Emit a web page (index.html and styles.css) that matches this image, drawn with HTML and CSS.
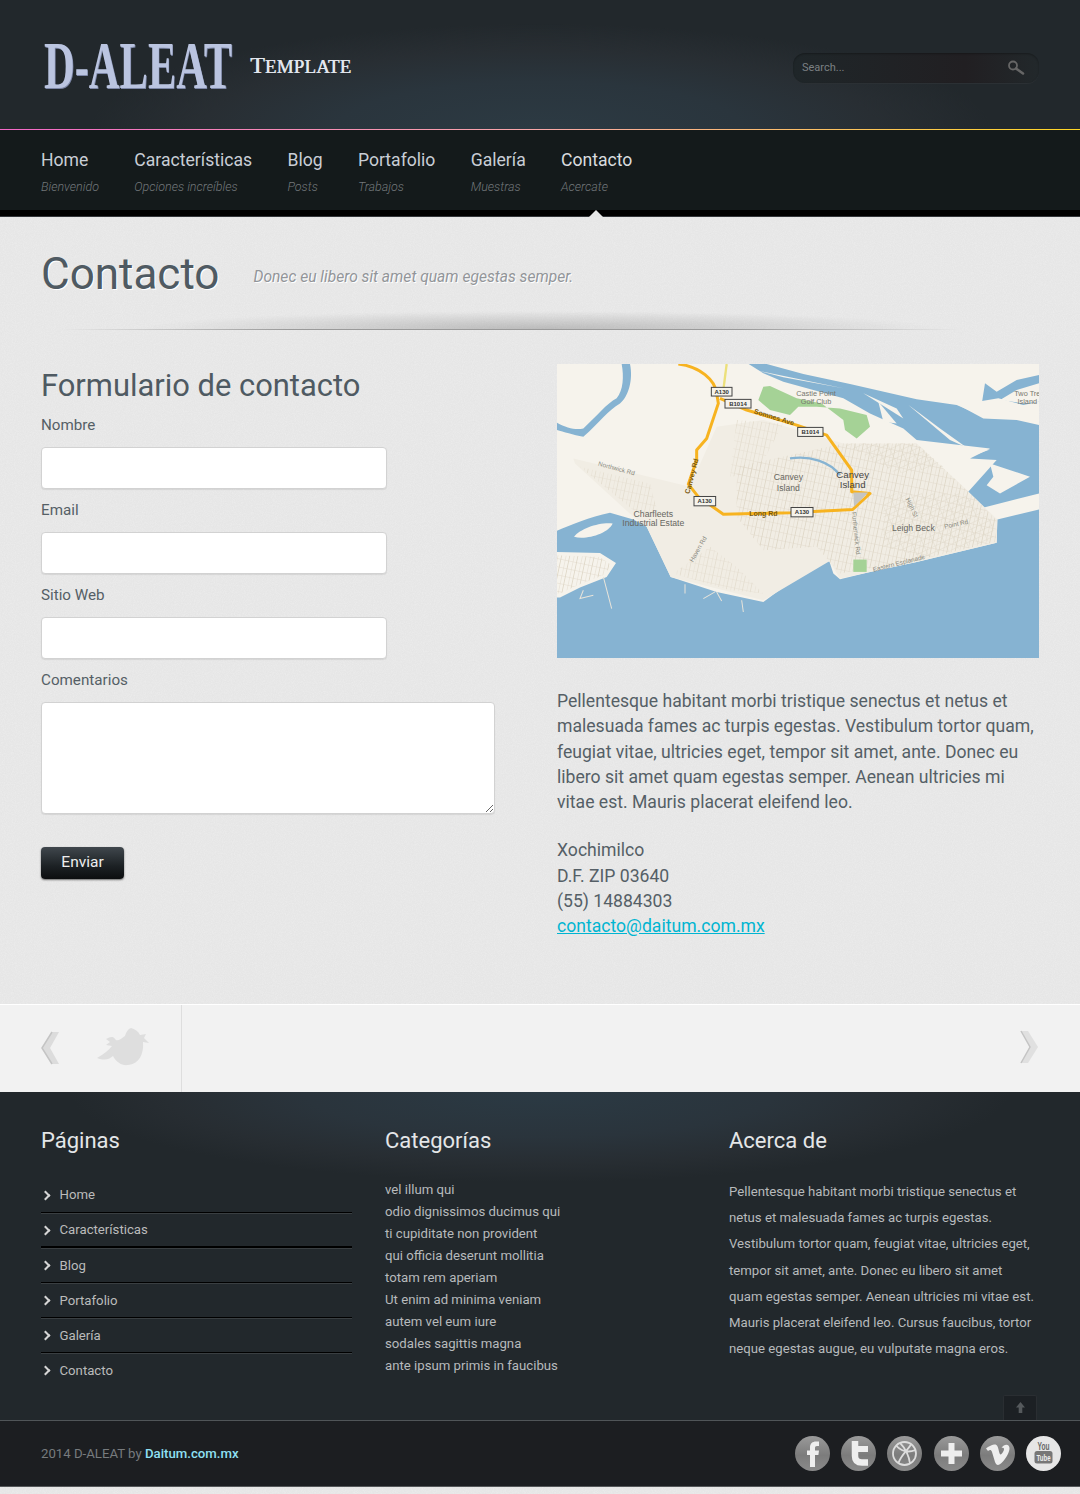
FILE: index.html
```html
<!DOCTYPE html>
<html lang="es">
<head>
<meta charset="utf-8">
<title>Contacto - D-ALEAT</title>
<link rel="stylesheet" href="styles.css">
</head>
<body>
<header class="site-header">
  <a class="logo"><span class="logo-box"><span class="logo-main">D-ALEAT</span></span><span class="logo-sub">T<span class="logo-small">EMPLATE</span></span></a>
  <form class="search">
    <span class="search-text">Search...</span>
    <svg class="search-icon" viewBox="0 0 18 15"><circle cx="6" cy="5.5" r="4" fill="none" stroke="#666" stroke-width="1.8"/><path d="M9 8.5l7 5" stroke="#666" stroke-width="2.6" stroke-linecap="round"/></svg>
  </form>
</header>
<nav class="main-nav">
  <a class="nav-item"><span class="nav-title">Home</span><em class="nav-sub">Bienvenido</em></a>
  <a class="nav-item"><span class="nav-title">Características</span><em class="nav-sub">Opciones increíbles</em></a>
  <a class="nav-item"><span class="nav-title">Blog</span><em class="nav-sub">Posts</em></a>
  <a class="nav-item"><span class="nav-title">Portafolio</span><em class="nav-sub">Trabajos</em></a>
  <a class="nav-item"><span class="nav-title">Galería</span><em class="nav-sub">Muestras</em></a>
  <a class="nav-item nav-active"><span class="nav-title">Contacto</span><em class="nav-sub">Acercate</em></a>
</nav>
<main class="content">
  <section class="page-head">
    <h1>Contacto</h1>
    <p>Donec eu libero sit amet quam egestas semper.</p>
  </section>
  <div class="divider"></div>
  <section class="columns">
    <form class="contact-form">
      <h2>Formulario de contacto</h2>
      <label>Nombre</label>
      <input type="text">
      <label>Email</label>
      <input type="text">
      <label>Sitio Web</label>
      <input type="text">
      <label>Comentarios</label>
      <textarea></textarea>
      <button type="button">Enviar</button>
    </form>
    <div class="contact-info">
      <svg class="map" viewBox="21 12 1446 881" preserveAspectRatio="none">
        <defs>
          <pattern id="streets" width="24" height="24" patternUnits="userSpaceOnUse" patternTransform="rotate(12)">
            <path d="M0 0H24M0 0V24M12 0V24" stroke="#dfd8c8" stroke-width="2.5" fill="none"/>
          </pattern>
          <pattern id="streets2" width="30" height="16" patternUnits="userSpaceOnUse" patternTransform="rotate(-25)">
            <path d="M0 0H30M0 0V16" stroke="#dfd8c8" stroke-width="2.5" fill="none"/>
          </pattern>
        </defs>
        <rect x="21" y="12" width="1446" height="881" fill="#f6f3ec"/>
        <path class="w" d="M21 512C60 495 120 470 180 458L250 478L290 500L362 650L500 695L640 725L790 615L838 603L850 640L870 657L960 635L1100 605L1340 548L1342 478L1467 448V893H21Z"/>
        <path class="l" d="M21 575L150 578L198 608L170 650L90 682L30 712L21 712Z"/>
        <path d="M21 585L150 590L185 615L160 645L90 672L30 700L21 700Z" fill="url(#streets)"/>
        <path class="l" d="M72 530C90 505 150 485 188 490C175 520 110 540 72 530Z"/>
        <path class="w" d="M240 12C250 60 235 110 210 130C175 150 150 185 100 230C70 225 40 215 21 210V188C50 205 80 210 100 205C140 170 170 130 200 115C220 90 222 50 215 12Z"/>
        <path class="w" d="M596 12H650L760 42L900 72L1100 118L1220 135L1290 165L1305 70L1340 95L1400 60L1467 45V70L1400 90L1350 120L1420 130L1467 125V400L1290 445L1240 418L1250 400L1340 300L1260 295L1320 265L1190 250L1100 240L1060 205L960 160L880 115L700 65L640 40Z"/>
        <path class="l" d="M1225 135L1345 115L1420 135L1467 125V195L1400 180L1300 175Z"/>
        <path class="l" d="M1320 310L1440 350L1350 400L1310 375L1330 350Z"/>
        <path class="l" d="M1075 135L1200 240L1250 262L1170 205L1110 160Z"/>
        <path class="l" d="M985 125L1040 190L1000 185Z"/>
        <path class="l" d="M940 100L1060 175L1040 145Z"/>
        <path class="l" d="M615 30L880 85L700 52Z"/>
        <path class="l" d="M1240 270L1320 268L1260 290Z"/>
        <path d="M70 295L420 380L500 200L640 180L880 250L1100 250L1240 380L1342 478L1340 548L1100 605L870 655L838 603L640 720L362 650L290 500L250 470L75 310Z" fill="#f1ede4"/>
        <path d="M560 320L880 250L1100 250L1240 380L1340 480L1338 545L1100 600L870 640L800 560L640 570L560 470Z" fill="url(#streets)"/>
        <path d="M880 250L1100 250L1180 320L1040 340ZM1000 400L1240 400L1330 490L1330 540L1120 590L1000 560Z" fill="url(#streets2)"/>
        <path d="M370 640L480 560L560 620L640 700L540 690ZM90 320L300 370L330 480L250 450ZM560 180L700 190L620 340L540 350Z" fill="url(#streets)" opacity=".7"/>
        <path class="w2" d="M720 295C780 285 840 305 870 345"/>
        <path d="M640 80L625 120L660 150L720 165L745 140L800 140L870 145L950 165L960 200L920 235L885 210L880 180L815 130L740 115L660 78Z" fill="#a5d296"/>
        <rect x="910" y="598" width="40" height="37" fill="#a5d296"/>
        <path d="M160 650L185 745M100 690L90 715L130 705M405 672V700M460 715L495 695M500 695L515 722M575 720L580 755" stroke="#e8e4da" stroke-width="3" fill="none"/>
        <path d="M530 12L520 90" stroke="#ece07a" stroke-width="7"/>
        <path class="r" d="M385 12C450 20 495 60 500 100L505 130L470 235L440 270L440 300L415 372L445 410L520 462L720 458L908 448L960 400L905 395L905 330L830 225L740 195L590 150L510 115"/>
        <path d="M910 397H955L912 440Z" fill="#c5c5c2"/>
        <g class="tag"><rect x="484" y="82" width="62" height="26"/><text x="515" y="101">A130</text></g>
        <g class="tag"><rect x="525" y="118" width="78" height="26"/><text x="564" y="137">B1014</text></g>
        <g class="tag"><rect x="743" y="202" width="76" height="27"/><text x="781" y="222">B1014</text></g>
        <g class="tag"><rect x="432" y="409" width="65" height="28"/><text x="464" y="429">A130</text></g>
        <g class="tag"><rect x="723" y="442" width="66" height="28"/><text x="756" y="462">A130</text></g>
        <g class="lbl">
          <text x="798" y="107">Castle Point</text><text x="798" y="131">Golf Club</text>
          <text x="1432" y="107" font-style="italic">Two Tre</text><text x="1432" y="131" font-style="italic">Island</text>
          <text x="715" y="361" class="big" font-style="italic">Canvey</text><text x="715" y="392" class="big" font-style="italic">Island</text>
          <text x="908" y="353" class="big2">Canvey</text><text x="908" y="385" class="big2">Island</text>
          <text x="310" y="469" class="big">Charfleets</text><text x="310" y="498" class="big">Industrial Estate</text>
          <text x="1090" y="512" class="big">Leigh Beck</text>
          <text x="640" y="467" class="road">Long Rd</text>
          <text transform="translate(198 331) rotate(15)" class="sm">Northwick Rd</text>
          <text transform="translate(432 350) rotate(-75)" class="road">Canvey Rd</text>
          <text transform="translate(670 178) rotate(17)" class="road">Somnes Ave</text>
          <text transform="translate(912 520) rotate(84)" class="sm">Furtherwick Rd</text>
          <text transform="translate(450 570) rotate(-60)" class="sm">Haven Rd</text>
          <text transform="translate(1080 445) rotate(65)" class="sm">High St</text>
          <text transform="translate(1220 498) rotate(-12)" class="sm">Point Rd</text>
          <text transform="translate(1048 615) rotate(-14)" class="sm">Eastern Esplanade</text>
        </g>
      </svg>
      <p class="intro">Pellentesque habitant morbi tristique senectus et netus et malesuada fames ac turpis egestas. Vestibulum tortor quam, feugiat vitae, ultricies eget, tempor sit amet, ante. Donec eu libero sit amet quam egestas semper. Aenean ultricies mi vitae est. Mauris placerat eleifend leo.</p>
      <p class="address">Xochimilco<br>D.F. ZIP 03640<br>(55) 14884303<br><a>contacto@daitum.com.mx</a></p>
    </div>
  </section>
</main>
<section class="tweets">
  <div class="tweet-side">
    <svg class="chev" viewBox="0 0 20 34"><path d="M18 1H11L1 17L11 33H18L9 17Z" fill="#dcdcdc"/><path d="M11 1L1 17L11 33" fill="none" stroke="#c4c4c4" stroke-width="1.5"/></svg>
    <svg class="bird" viewBox="0 0 53 39"><path d="M34 1C31 2 29 5 28 9C24 12 20 15 18 12C16 9 13 10 9 12L13 15L9 18L15 19C12 23 7 27 0 31C8 34 13 32 16 29C19 35 25 39 31 38C42 37 47 27 46 15L52 16L47 11L49 7L43 8C41 4 38 2 34 1Z" fill="#dedede"/></svg>
  </div>
  <div class="tweet-body">
    <svg class="chev" viewBox="0 0 20 34"><path d="M2 1H9L19 17L9 33H2L11 17Z" fill="#e0e0e0"/><path d="M2 1L11 17L2 33" fill="none" stroke="#c4c4c4" stroke-width="1.5"/></svg>
  </div>
</section>
<footer>
  <div class="footer-main">
    <div class="footer-col">
      <h3>Páginas</h3>
      <ul class="page-links">
        <li>Home</li>
        <li class="thick">Características</li>
        <li>Blog</li>
        <li>Portafolio</li>
        <li>Galería</li>
        <li>Contacto</li>
      </ul>
    </div>
    <div class="footer-col">
      <h3>Categorías</h3>
      <ul class="cat-links">
        <li>vel illum qui</li>
        <li>odio dignissimos ducimus qui</li>
        <li>ti cupiditate non provident</li>
        <li>qui officia deserunt mollitia</li>
        <li>totam rem aperiam</li>
        <li>Ut enim ad minima veniam</li>
        <li>autem vel eum iure</li>
        <li>sodales sagittis magna</li>
        <li>ante ipsum primis in faucibus</li>
      </ul>
    </div>
    <div class="footer-col">
      <h3>Acerca de</h3>
      <p class="about">Pellentesque habitant morbi tristique senectus et netus et malesuada fames ac turpis egestas. Vestibulum tortor quam, feugiat vitae, ultricies eget, tempor sit amet, ante. Donec eu libero sit amet quam egestas semper. Aenean ultricies mi vitae est. Mauris placerat eleifend leo. Cursus faucibus, tortor neque egestas augue, eu vulputate magna eros.</p>
    </div>
    <a class="to-top"><svg viewBox="0 0 10 12"><path d="M5 0L10 6H7V12H3V6H0Z" fill="#55595c"/></svg></a>
  </div>
  <div class="footer-bottom">
    <p class="copy">2014 D-ALEAT by <a>Daitum.com.mx</a></p>
    <div class="social">
      <svg viewBox="0 0 35 35"><defs><linearGradient id="dg" x1="0" y1="0" x2="0" y2="1"><stop offset="0" stop-color="#9a9a9a"/><stop offset=".55" stop-color="#7c7c7c"/><stop offset="1" stop-color="#8a8a8a"/></linearGradient></defs><circle fill="url(#dg)" cx="17.5" cy="17.5" r="17.5"/><path class="glyph" d="M15 31V19H12V14.500H15V11.500C15 7.500 17.500 5.500 21 5.500H24V10H22C20.500 10 20 10.700 20 12V14.500H24L23.400 19H20V31Z"/></svg>
      <svg viewBox="0 0 35 35"><circle fill="url(#dg)" cx="17.5" cy="17.5" r="17.5"/><path d="M14 5V20C14 25 17 26.500 21 26.500H27" fill="none" stroke="#eee" stroke-width="6.500"/><path d="M14 13H27" stroke="#eee" stroke-width="6"/></svg>
      <svg viewBox="0 0 35 35"><circle fill="url(#dg)" cx="17.5" cy="17.5" r="17.5"/><g fill="none" stroke="#ddd" stroke-width="1.800"><circle cx="17.500" cy="17.500" r="11.500"/><path d="M9 9.500C14 15 21 17 28.500 14M11.500 27C14 19 20 15 24 8.500M13 6.800C18 12 22 20 23 27.500"/></g></svg>
      <svg viewBox="0 0 35 35"><circle fill="url(#dg)" cx="17.5" cy="17.5" r="17.5"/><path class="glyph" d="M14.500 7H20.500V14.500H28V20.500H20.500V28H14.500V20.500H7V14.500H14.500Z"/></svg>
      <svg viewBox="0 0 35 35"><circle fill="url(#dg)" cx="17.5" cy="17.5" r="17.5"/><path class="glyph" d="M6 12.500L8 15C10 13.500 11 13.500 12 16L15 26C16.500 30 19 29.500 22 26.500C26 22.500 29 17 29.500 13C30 8 24.500 7 21.500 12C24 11 25 13 23 16C21 19 20 19.500 19 15.500C18 10 17 8 14 8.500C11.500 9 8.500 10.500 6 12.500Z"/></svg>
      <svg viewBox="0 0 35 35"><circle cx="17.5" cy="17.5" r="17.5" fill="#e6e6e6"/><text class="you" x="11.500" y="13.500" textLength="12" lengthAdjust="spacingAndGlyphs">You</text><rect x="8.500" y="15" width="18" height="12.500" rx="2.500" fill="#777"/><text class="tube" x="10.500" y="25" textLength="14" lengthAdjust="spacingAndGlyphs">Tube</text></svg>
    </div>
  </div>
</footer>
</body>
</html>
```
FILE: styles.css
```css
* { box-sizing: border-box; }
html, body { margin: 0; padding: 0; }
body {
  font-family: Roboto, "Liberation Sans", sans-serif;
  color: #555f66;
  background-color: #ececec;
  background-image: url("data:image/svg+xml,%3Csvg xmlns='http://www.w3.org/2000/svg' width='240' height='240'%3E%3Cfilter id='n'%3E%3CfeTurbulence type='fractalNoise' baseFrequency='.9' numOctaves='2' stitchTiles='stitch'/%3E%3CfeColorMatrix values='0 0 0 0 .4 0 0 0 0 .4 0 0 0 0 .4 0 0 0 .13 0'/%3E%3C/filter%3E%3Crect width='240' height='240' filter='url(%23n)'/%3E%3C/svg%3E");
  padding-bottom: 7px;
}
p, h1, h2, h3, ul { margin: 0; padding: 0; }
ul { list-style: none; }

/* header */
.site-header {
  height: 130px;
  padding: 5px 41px 0;
  display: flex;
  align-items: center;
  justify-content: space-between;
  background:
    radial-gradient(ellipse 450px 105px at 50% 100%, #2c3a43 0%, #2a353d 45%, #282e33 75%, rgba(34,40,44,0) 100%),
    #22282c;
  border-style: solid;
  border-width: 0 0 1px;
  border-image: linear-gradient(90deg, #f468c8, #f9a8a8 50%, #ffd724) 1;
}
.logo { display: flex; align-items: center; padding-left: 3px; }
.logo-box { display: block; width: 206px; height: 66px; margin-top: -4px; }
.logo-main {
  display: block;
  width: 300px;
  font: bold 68px/66px "Liberation Serif", serif;
  color: #bac4e0;
  text-shadow: 1px 1px 0 #7c86a6;
  white-space: nowrap;
  transform: scaleX(.625);
  transform-origin: 0 0;
}
.logo-sub {
  font: 400 24px/24px "Liberation Serif", serif;
  letter-spacing: .15px;
  color: #e2e6ed;
  text-shadow: .5px 0 0 #e2e6ed;
  margin-top: -2px;
}
.logo-small { font-size: 19px; }
.search {
  width: 246px;
  height: 30px;
  margin-top: 2px;
  padding: 0 14px 0 9px;
  display: flex;
  align-items: center;
  justify-content: space-between;
  border-radius: 12px;
  background: linear-gradient(90deg, #1f2629, #211f22 70%, #22282b);
  box-shadow: inset 0 1px 2px rgba(0,0,0,.3), 0 1px 0 #2b3034;
}
.search-text { font-size: 11px; color: #7b8083; padding-bottom: 2px; }
.search-icon { width: 18px; height: 15px; margin-top: -1px; }

/* navigation */
.main-nav {
  position: relative;
  height: 86px;
  padding: 0 41px 0;
  display: flex;
  gap: 35.3px;
  background: #141a1b;
  border-bottom: 6px solid #000;
  box-shadow: 0 1px 0 #33363a;
}
.main-nav::after {
  content: "";
  position: absolute;
  left: 589px;
  bottom: -7px;
  border: 7px solid transparent;
  border-top: 0;
  border-bottom-color: #e6e6e6;
}
.nav-item { display: block; padding-top: 17px; }
.nav-title { display: block; font-size: 17.6px; line-height: 26px; color: #c9ced6; }
.nav-sub { display: block; margin-top: 3px; font-size: 12.5px; line-height: 22px; font-weight: 300; font-style: italic; color: #72777a; }
.nav-active .nav-title { color: #d9dcdf; }

/* page head */
.content { padding: 29px 41px 64px; }
.page-head { display: flex; align-items: center; gap: 34px; height: 58px; }
h1 { font-size: 44px; line-height: 58px; font-weight: 400; color: #4f5a62; text-shadow: 1px 1px 0 #fff; }
.page-head p { margin-top: 6px; font-size: 15.6px; font-style: italic; color: #929599; text-shadow: 1px 1px 0 #fff; }
.divider {
  height: 27px;
  margin: 0 0 34px;
  border-style: solid;
  border-width: 0 0 1px;
  border-image: linear-gradient(90deg, rgba(150,150,150,0) 2%, #9a9a9a 25%, #9a9a9a 70%, rgba(150,150,150,0) 92%) 1;
  background: radial-gradient(ellipse 400px 18px at 50% 100%, rgba(120,120,120,.4), rgba(120,120,120,0) 100%);
}

/* columns */
.columns { display: grid; grid-template-columns: 1fr 482px; }
.contact-form { display: flex; flex-direction: column; align-items: flex-start; }
h2 { font-size: 30.9px; line-height: 42px; padding-top: 1px; font-weight: 400; color: #4f5a62; margin-bottom: 7px; }
label { font-size: 15.2px; line-height: 22px; margin-bottom: 11px; }
input, textarea {
  display: block;
  background: #fff;
  border: 1px solid #d2d2d2;
  border-radius: 4px;
  box-shadow: 0 1px 1px rgba(0,0,0,.08);
  outline: 0;
}
input { width: 346px; height: 42px; margin-bottom: 10px; }
textarea { width: 454px; height: 112px; }
button {
  margin-top: 33px;
  width: 83px;
  height: 32px;
  padding: 0 0 2px;
  border: 0;
  border-radius: 4px;
  background: linear-gradient(#40474d, #1c2124 60%, #0c0e0f);
  box-shadow: 0 1px 2px rgba(0,0,0,.55);
  color: #eee;
  font: 400 15.5px Roboto, sans-serif;
}
.map { display: block; width: 482px; height: 294px; }
.map .w { fill: #86b3d2; }
.map .l { fill: #f6f3ec; }
.map .w2 { fill: none; stroke: #86b3d2; stroke-width: 7; }
.map .r { fill: none; stroke: #f7b320; stroke-width: 9; stroke-linejoin: round; }
.map .tag rect { fill: #f5f3ec; stroke: #444; stroke-width: 3; }
.map .tag text { font: bold 18px "Liberation Sans", sans-serif; fill: #333; text-anchor: middle; }
.map .lbl text { font: 22px "Liberation Sans", sans-serif; fill: #77776f; text-anchor: middle; }
.map .lbl .big { font-size: 26px; fill: #66665f; }
.map .lbl .big2 { font-size: 29px; fill: #44443f; }
.map .lbl .road { font-size: 21px; font-weight: bold; fill: #7a5a10; }
.map .lbl .sm { font-size: 19px; fill: #8a8a80; }
.intro { margin-top: 31px; font-size: 17.6px; line-height: 25.3px; }
.address { margin-top: 23px; font-size: 17.6px; line-height: 25.3px; }
.address a { color: #00b5d1; text-decoration: underline; }

/* tweet strip */
.tweets {
  height: 88px;
  display: flex;
  background: #f2f2f2;
  border-top: 1px solid #fff;
}
.tweet-side {
  width: 182px;
  padding-left: 41px;
  display: flex;
  align-items: center;
  gap: 36px;
  border-right: 1px solid #dedede;
}
.tweet-body { flex: 1; padding: 0 41px 2px 0; display: flex; align-items: center; justify-content: flex-end; }
.chev { width: 20px; height: 34px; }
.bird { width: 53px; height: 39px; margin-top: -4px; }

/* footer */
.footer-main {
  position: relative;
  height: 329px;
  padding: 33px 41px 0;
  display: grid;
  grid-template-columns: repeat(3, 311px);
  gap: 33px;
  background:
    radial-gradient(ellipse 470px 90px at 50% 0, #2b3a44 0%, #2a343c 50%, #272d32 80%, rgba(34,40,44,0) 100%),
    #22282c;
  border-bottom: 1px solid #505558;
}
h3 { font-size: 22px; line-height: 32px; font-weight: 400; color: #e4e6e8; margin-bottom: 22px; }
.page-links { margin-top: -1px; }
.page-links li {
  position: relative;
  height: 35px;
  padding: 6.5px 0 0 18.5px;
  font-size: 13.2px;
  line-height: 22px;
  color: #bbb;
  border-bottom: 1px solid #000;
  box-shadow: 0 1px 0 #3a3f42;
}
.page-links li.thick { border-bottom-width: 2px; }
.page-links .thick ~ li { padding-top: 7.5px; }
.page-links li:last-child { border: 0; box-shadow: none; }
.page-links li::before {
  content: "";
  position: absolute;
  left: 1px;
  top: 14px;
  width: 5px;
  height: 5px;
  border-top: 2.5px solid #d5d5d5;
  border-right: 2.5px solid #d5d5d5;
  transform: rotate(45deg);
}
.cat-links li { font-size: 13.2px; line-height: 22px; color: #b7babc; }
.about { font-size: 13.2px; line-height: 26.3px; color: #b7babc; padding-right: 3px; }
.to-top {
  position: absolute;
  right: 43px;
  bottom: 0;
  width: 34px;
  height: 25px;
  display: flex;
  align-items: center;
  justify-content: center;
  background: #1c2024;
  border: 1px solid #2a2e32;
  border-bottom: 0;
  border-radius: 2px 2px 0 0;
}
.to-top svg { width: 9px; height: 11px; }
.footer-bottom {
  height: 66px;
  padding: 0 19px 0 41px;
  display: flex;
  align-items: center;
  justify-content: space-between;
  background: #1c1e21;
  border-bottom: 1px solid #55585a;
}
.copy { font-size: 13.2px; color: #777b7e; }
.copy a { color: #8fe0f3; font-weight: 500; }
.social { display: flex; gap: 11.2px; }
.social svg { width: 35px; height: 35px; display: block; }
.social .glyph { fill: #eee; }
.social .you { font: bold 10px "Liberation Sans", sans-serif; fill: #666; }
.social .tube { font: bold 9.5px "Liberation Sans", sans-serif; fill: #eee; }
```
